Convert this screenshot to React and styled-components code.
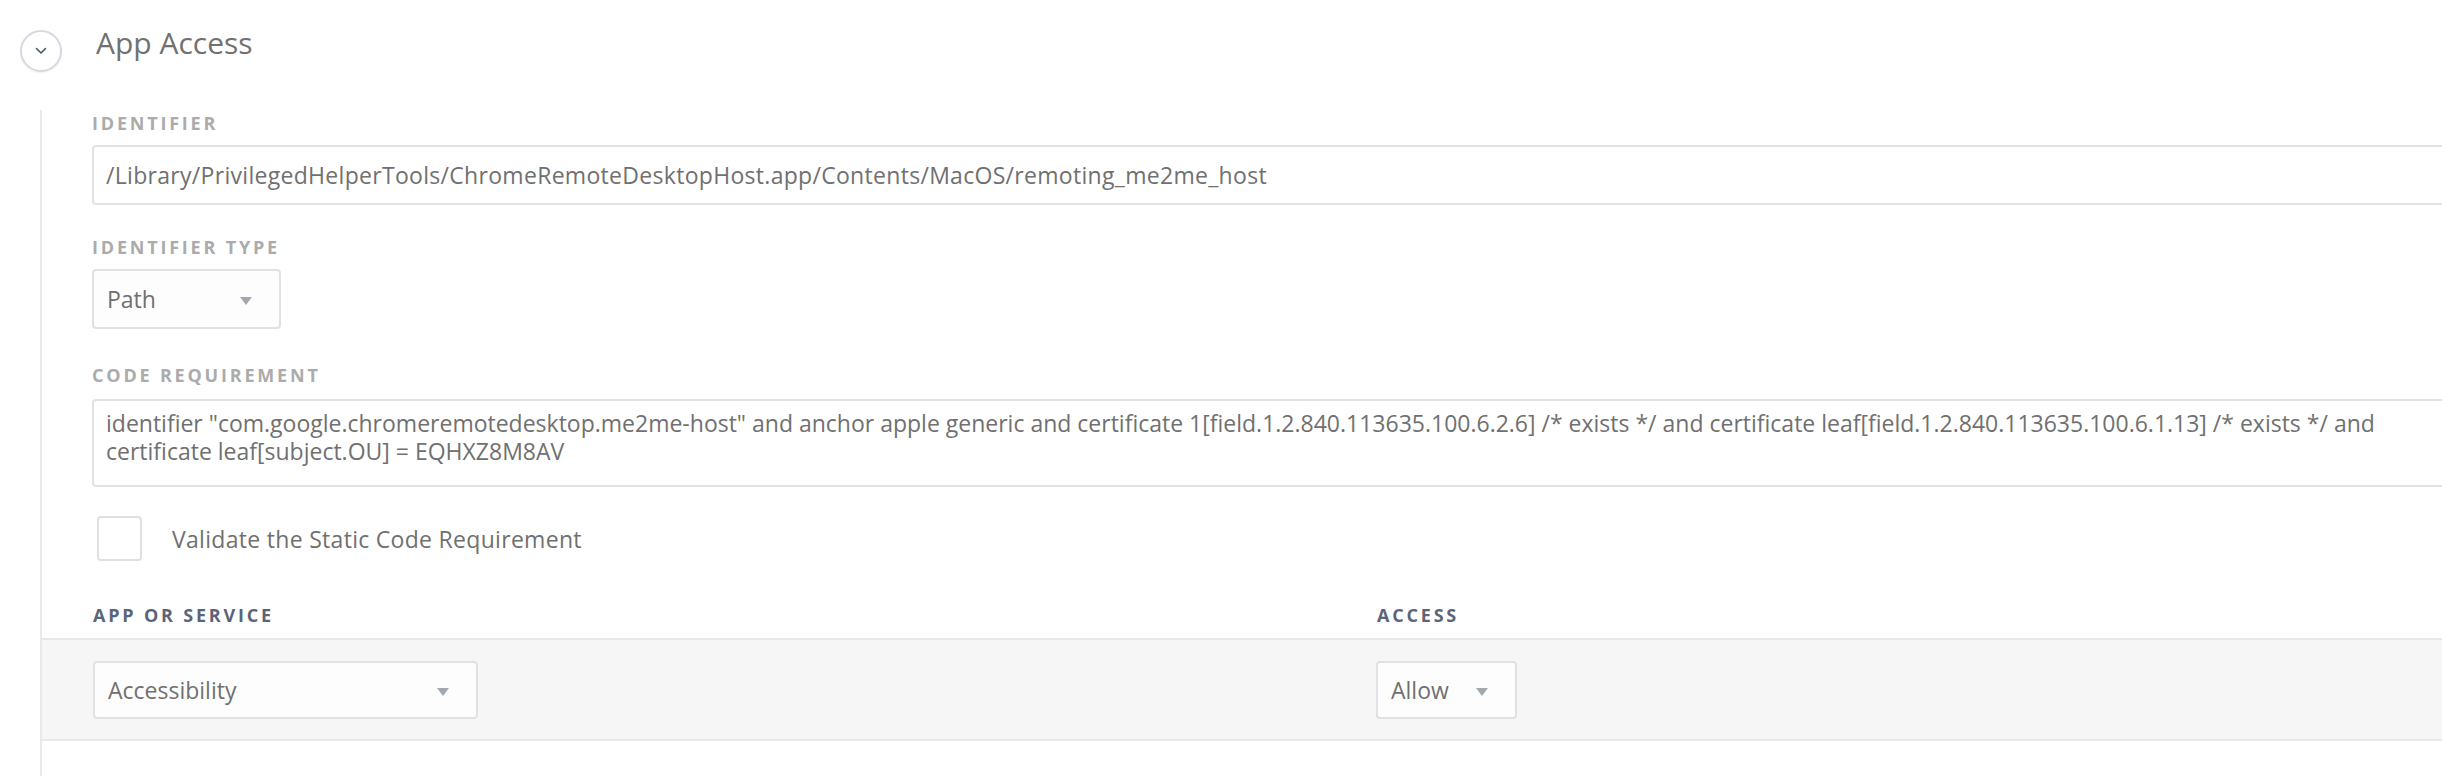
import styled, { createGlobalStyle } from "styled-components";

const GlobalStyle = createGlobalStyle`
  html, body {
    margin: 0;
    padding: 0;
    background: #ffffff;
    overflow: hidden;
  }
  body {
    font-family: "Open Sans", Lato, sans-serif;
    color: #6e6e6e;
  }
`;

const Page = styled.div`
  width: 2700px;
  height: 776px;
`;

const Header = styled.header`
  display: flex;
  align-items: flex-start;
  gap: 34px;
  padding: 25px 0 0 20px;
  height: 47px;
  margin-bottom: 38px;
`;

const ToggleButton = styled.button`
  width: 42px;
  height: 42px;
  margin-top: 5px;
  border-radius: 50%;
  border: 2px solid #d6dae0;
  background: #ffffff;
  box-shadow: 0 1px 2px rgba(0, 0, 0, 0.06);
  display: flex;
  align-items: center;
  justify-content: center;
  padding: 0;
  box-sizing: border-box;
`;

const Title = styled.h1`
  margin: 0;
  font-size: 30px;
  line-height: 36px;
  font-weight: 400;
  color: #717171;
`;

const Body = styled.div`
  margin-left: 40px;
  border-left: 2px solid #e7e9ed;
  height: 666px;
`;

const Form = styled.div`
  padding: 2px 0 0 50px;
  display: flex;
  flex-direction: column;
`;

const Group = styled.div`
  display: flex;
  flex-direction: column;
  margin-top: ${(p) => p.$top || 0}px;
`;

const Label = styled.div`
  font-size: 18px;
  line-height: 22px;
  font-weight: 700;
  letter-spacing: 2.8px;
  text-transform: uppercase;
  color: ${(p) => (p.$dark ? "#5b6478" : "#ababab")};
  margin-bottom: ${(p) => (p.$gap ?? 12)}px;
`;

const TextInput = styled.div`
  box-sizing: border-box;
  height: 60px;
  border: 2px solid #e2e2e2;
  border-radius: 4px;
  padding: 0 12px;
  display: flex;
  align-items: center;
  font-size: 23px;
  line-height: 28px;
  letter-spacing: 0.3px;
  color: #707070;
  white-space: nowrap;
`;

const TextArea = styled.div`
  box-sizing: border-box;
  height: 88px;
  border: 2px solid #e2e2e2;
  border-radius: 4px;
  padding: 8px 12px 0;
  font-size: 23px;
  line-height: 28px;
  color: #707070;
`;

const Line = styled.div`
  white-space: nowrap;
`;

const Select = styled.div`
  box-sizing: border-box;
  width: ${(p) => p.$width}px;
  height: ${(p) => p.$height || 60}px;
  border: 2px solid #dfe1e5;
  border-radius: 4px;
  background: #fdfdfd;
  padding: 0 27px 0 13px;
  display: flex;
  align-items: center;
  justify-content: space-between;
  font-size: 23px;
  color: #707070;
`;

const Caret = styled.span`
  width: 0;
  height: 0;
  border-left: 6px solid transparent;
  border-right: 6px solid transparent;
  border-top: 8px solid #a3a7ae;
  margin-top: 3px;
`;

const CheckRow = styled.label`
  display: flex;
  align-items: center;
  gap: 30px;
  margin: 29px 0 0 5px;
  font-size: 23px;
  letter-spacing: 0.3px;
  color: #707070;
`;

const CheckBox = styled.span`
  box-sizing: border-box;
  width: 45px;
  height: 45px;
  border: 2px solid #e0e0e0;
  border-radius: 4px;
  background: #ffffff;
`;

const TableHead = styled.div`
  display: grid;
  grid-template-columns: 1284px 1fr;
  padding: 43px 0 0 51px;
`;

const TableRow = styled.div`
  display: grid;
  grid-template-columns: 1283px 1fr;
  align-items: center;
  padding: 21px 0 20px 51px;
  margin-top: 12px;
  background: #f6f6f7;
  border-top: 2px solid #e5e8ed;
  border-bottom: 2px solid #e5e8ed;
`;

function Dropdown({ value, width, height }) {
  return (
    <Select $width={width} $height={height}>
      <span>{value}</span>
      <Caret />
    </Select>
  );
}

export default function App() {
  return (
    <Page>
      <GlobalStyle />
      <Header>
        <ToggleButton aria-label="Collapse">
          <svg width="12" height="8" viewBox="0 0 12 8" fill="none">
            <path d="M1.5 1.5 6 6l4.5-4.5" stroke="#4d5668" strokeWidth="1.6" strokeLinecap="round" strokeLinejoin="round" />
          </svg>
        </ToggleButton>
        <Title>App Access</Title>
      </Header>
      <Body>
        <Form>
          <Group>
            <Label $gap={11}>Identifier</Label>
            <TextInput>
              /Library/PrivilegedHelperTools/ChromeRemoteDesktopHost.app/Contents/MacOS/remoting_me2me_host
            </TextInput>
          </Group>
          <Group $top={31}>
            <Label $gap={11}>Identifier Type</Label>
            <Dropdown value="Path" width={189} />
          </Group>
          <Group $top={35}>
            <Label $gap={13}>Code Requirement</Label>
            <TextArea>
              <Line>
                identifier "com.google.chromeremotedesktop.me2me-host" and anchor apple generic and certificate 1[field.1.2.840.113635.100.6.2.6] /* exists */ and certificate leaf[field.1.2.840.113635.100.6.1.13] /* exists */ and
              </Line>
              <Line>certificate leaf[subject.OU] = EQHXZ8M8AV</Line>
            </TextArea>
          </Group>
          <CheckRow>
            <CheckBox />
            Validate the Static Code Requirement
          </CheckRow>
        </Form>
        <TableHead>
          <Label $dark $gap={0}>App or Service</Label>
          <Label $dark $gap={0}>Access</Label>
        </TableHead>
        <TableRow>
          <Dropdown value="Accessibility" width={385} height={58} />
          <Dropdown value="Allow" width={141} height={58} />
        </TableRow>
      </Body>
    </Page>
  );
}
